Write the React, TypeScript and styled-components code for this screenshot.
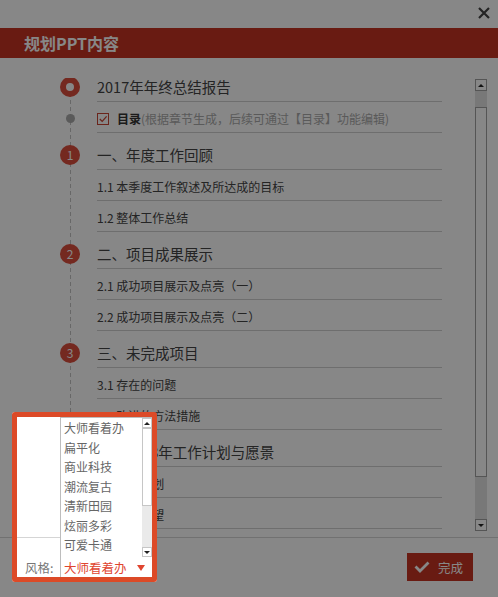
import { useLayoutEffect, useRef } from 'react';
import styled, { createGlobalStyle } from 'styled-components';

const GlobalStyle = createGlobalStyle`
  html, body {
    margin: 0;
    padding: 0;
    background: #fff;
    overflow: hidden;
  }
  body {
    font-family: "Noto Sans CJK SC", "Noto Sans", sans-serif;
  }
  * {
    box-sizing: border-box;
  }
`;

const RED = '#c73422';
const BADGE_RED = '#dc4e3d';

const Dialog = styled.div`
  position: relative;
  width: 498px;
  height: 597px;
  background: #fff;
  display: flex;
  flex-direction: column;
  overflow: hidden;
`;

const TopBar = styled.div`
  height: 28px;
  display: flex;
  justify-content: flex-end;
  align-items: flex-start;
  padding: 7px 8px 0 0;
`;

const CloseButton = styled.button`
  width: 12px;
  height: 12px;
  padding: 0;
  border: 0;
  background: none;
  display: flex;
`;

const Header = styled.h1`
  margin: 0;
  height: 30px;
  padding-left: 24px;
  background: ${RED};
  color: #fff;
  font-size: 16px;
  font-weight: 700;
  line-height: 30px;
`;

const Body = styled.div`
  height: 479px;
  display: flex;
  padding: 20px 11px 0 0;
`;

const Viewport = styled.div`
  flex: 1;
  height: 452px;
  overflow: hidden;
`;

const Outline = styled.ul`
  list-style: none;
  margin: 0;
  padding: 0 0 60px 60px;
  background: repeating-linear-gradient(to bottom, #c2c2c2 0 4px, transparent 4px 7px) 70px 0 / 1px 100% no-repeat;
`;

const Row = styled.li`
  display: flex;
`;

const Marker = styled.div`
  width: 20px;
  margin-right: 17px;
  padding-top: 12px;
  display: flex;
  justify-content: center;
  align-items: flex-start;
`;

const Ring = styled.span`
  width: 20px;
  height: 20px;
  border-radius: 50%;
  border: 6px solid ${BADGE_RED};
  background: #fff;
`;

const Dot = styled.span`
  width: 9px;
  height: 9px;
  border-radius: 50%;
  background: #ababab;
`;

const Badge = styled.span`
  width: 20px;
  height: 20px;
  border-radius: 50%;
  background: ${BADGE_RED};
  color: #fff;
  font-size: 12px;
  line-height: 20px;
  text-align: center;
`;

const Label = styled.div<{ $big?: boolean }>`
  width: 345px;
  display: flex;
  align-items: center;
  padding: ${(p) => (p.$big ? '12px 0 4px' : '7px 0 4px')};
  border-bottom: 1px solid #d0d0d0;
  color: #444;
  font-size: ${(p) => (p.$big ? '14.5px' : '12px')};
  line-height: ${(p) => (p.$big ? '20px' : '19px')};
  white-space: nowrap;
`;

const Checkbox = styled.span`
  width: 12px;
  height: 12px;
  margin-right: 8px;
  border: 1px solid #c94433;
  background: #fff;
  display: flex;
`;

const TocTitle = styled.b`
  color: #333;
  font-weight: 700;
`;

const Hint = styled.span`
  color: #aaa;
`;

const Scrollbar = styled.div`
  width: 12px;
  height: 452px;
  margin-top: 1px;
  display: flex;
  flex-direction: column;
`;

const ArrowButton = styled.span<{ $size: number; $down?: boolean; $border: string }>`
  width: ${(p) => p.$size}px;
  height: ${(p) => p.$size}px;
  flex: none;
  border: 1px solid ${(p) => p.$border};
  background: #fff;
  display: flex;
  align-items: center;
  justify-content: center;

  &::after {
    content: '';
    border-left: 3px solid transparent;
    border-right: 3px solid transparent;
    ${(p) => (p.$down ? 'border-top: 3px solid #222;' : 'border-bottom: 3px solid #222;')}
  }
`;

const Track = styled.span<{ $size?: number; $color: string }>`
  flex: ${(p) => (p.$size ? `0 0 ${p.$size}px` : '1')};
  background: ${(p) => p.$color};
`;

const Thumb = styled.span<{ $size: number; $border: string }>`
  flex: 0 0 ${(p) => p.$size}px;
  background: #fff;
  border: 1px solid ${(p) => p.$border};
`;

const Footer = styled.footer`
  flex: 1;
  display: flex;
  justify-content: space-between;
  align-items: flex-start;
  padding: 15px 25px 0;
  border-top: 1px solid #d5d5d5;
`;

const Field = styled.div`
  position: relative;
  margin-top: 3px;
  display: flex;
  align-items: center;
`;

const FieldLabel = styled.span`
  width: 35px;
  color: #777;
  font-size: 12.5px;
`;

const Select = styled.div`
  position: relative;
  width: 93px;
  height: 23px;
  padding: 0 7px 0 3px;
  display: flex;
  align-items: center;
  justify-content: space-between;
  border: 1px solid #bdbdbd;
  background: #fff;
  color: #e0452f;
  font-size: 12.5px;

  &::after {
    content: '';
    border-left: 4.5px solid transparent;
    border-right: 4.5px solid transparent;
    border-top: 6px solid #e0452f;
  }
`;

const Dropdown = styled.div`
  position: absolute;
  left: -1px;
  bottom: 100%;
  z-index: 1;
  width: 93px;
  height: 140px;
  display: flex;
  background: #fff;
  border: 1px solid #bdbdbd;
  border-bottom: 0;
`;

const Options = styled.ul`
  flex: 1;
  list-style: none;
  margin: 0;
  padding: 0;
`;

const Option = styled.li`
  height: 19.5px;
  padding-left: 3px;
  color: #666;
  font-size: 12px;
  line-height: 19.5px;
  white-space: nowrap;
`;

const MiniScrollbar = styled.div`
  width: 10px;
  display: flex;
  flex-direction: column;
`;

const Spotlight = styled.div`
  position: absolute;
  left: -13px;
  top: -144px;
  z-index: 2;
  width: 145px;
  height: 170px;
  border: 5px solid #dc4a27;
  border-radius: 3px;
  box-shadow: 0 0 0 1200px rgba(0, 0, 0, 0.47);
  pointer-events: none;
`;

const DoneButton = styled.button`
  width: 66px;
  height: 28px;
  padding: 0 0 0 7px;
  border: 0;
  background: ${RED};
  color: #fff;
  font-family: inherit;
  font-size: 12.5px;
  display: flex;
  align-items: center;
  gap: 8px;
`;

type OutlineItem =
  | { kind: 'cover'; text: string }
  | { kind: 'toc' }
  | { kind: 'section'; num: number; text: string }
  | { kind: 'sub'; text: string };

const outline: OutlineItem[] = [
  { kind: 'cover', text: '2017年年终总结报告' },
  { kind: 'toc' },
  { kind: 'section', num: 1, text: '一、年度工作回顾' },
  { kind: 'sub', text: '1.1 本季度工作叙述及所达成的目标' },
  { kind: 'sub', text: '1.2 整体工作总结' },
  { kind: 'section', num: 2, text: '二、项目成果展示' },
  { kind: 'sub', text: '2.1 成功项目展示及点亮（一）' },
  { kind: 'sub', text: '2.2 成功项目展示及点亮（二）' },
  { kind: 'section', num: 3, text: '三、未完成项目' },
  { kind: 'sub', text: '3.1 存在的问题' },
  { kind: 'sub', text: '3.2 改进的方法措施' },
  { kind: 'section', num: 4, text: '四、2018年工作计划与愿景' },
  { kind: 'sub', text: '4.1 工作计划' },
  { kind: 'sub', text: '4.2 工作展望' },
];

const styles = ['大师看着办', '扁平化', '商业科技', '潮流复古', '清新田园', '炫丽多彩', '可爱卡通'];

function OutlineRow({ item }: { item: OutlineItem }) {
  const big = item.kind === 'cover' || item.kind === 'section';
  return (
    <Row>
      <Marker>
        {item.kind === 'cover' && <Ring />}
        {item.kind === 'toc' && <Dot />}
        {item.kind === 'section' && <Badge>{item.num}</Badge>}
      </Marker>
      {item.kind === 'toc' ? (
        <Label>
          <Checkbox>
            <svg width="10" height="10" viewBox="0 0 10 10">
              <path d="M1.8 5 4.2 7.4 8.6 2.4" fill="none" stroke="#c94433" strokeWidth="1.3" />
            </svg>
          </Checkbox>
          <TocTitle>目录</TocTitle>
          <Hint>(根据章节生成，后续可通过【目录】功能编辑)</Hint>
        </Label>
      ) : (
        <Label $big={big}>{item.text}</Label>
      )}
    </Row>
  );
}

export default function App() {
  const viewport = useRef<HTMLDivElement>(null);

  useLayoutEffect(() => {
    if (viewport.current) viewport.current.scrollTop = 13;
  }, []);

  return (
    <>
      <GlobalStyle />
      <Dialog>
        <TopBar>
          <CloseButton aria-label="关闭">
            <svg width="12" height="12" viewBox="0 0 12 12">
              <path d="M1 1 11 11M11 1 1 11" stroke="#444" strokeWidth="2.2" />
            </svg>
          </CloseButton>
        </TopBar>
        <Header>规划PPT内容</Header>
        <Body>
          <Viewport ref={viewport}>
            <Outline>
              {outline.map((item, i) => (
                <OutlineRow key={i} item={item} />
              ))}
            </Outline>
          </Viewport>
          <Scrollbar>
            <ArrowButton $size={12} $border="#a0a0a0" />
            <Track $size={16} $color="#e2e2e2" />
            <Thumb $size={370} $border="#a0a0a0" />
            <Track $color="#e2e2e2" />
            <ArrowButton $size={12} $border="#a0a0a0" $down />
          </Scrollbar>
        </Body>
        <Footer>
          <Field>
            <FieldLabel>风格:</FieldLabel>
            <Select>
              大师看着办
              <Dropdown>
                <Options>
                  {styles.map((s) => (
                    <Option key={s}>{s}</Option>
                  ))}
                </Options>
                <MiniScrollbar>
                  <ArrowButton $size={10} $border="#c6c6c6" />
                  <Thumb $size={78} $border="#c6c6c6" />
                  <Track $color="#eaeaea" />
                  <ArrowButton $size={10} $border="#c6c6c6" $down />
                </MiniScrollbar>
              </Dropdown>
            </Select>
            <Spotlight />
          </Field>
          <DoneButton>
            <svg width="16" height="12" viewBox="0 0 16 12">
              <path d="M1.5 5.5 6 10 14.5 1.5" fill="none" stroke="#fff" strokeWidth="2.8" />
            </svg>
            完成
          </DoneButton>
        </Footer>
      </Dialog>
    </>
  );
}
